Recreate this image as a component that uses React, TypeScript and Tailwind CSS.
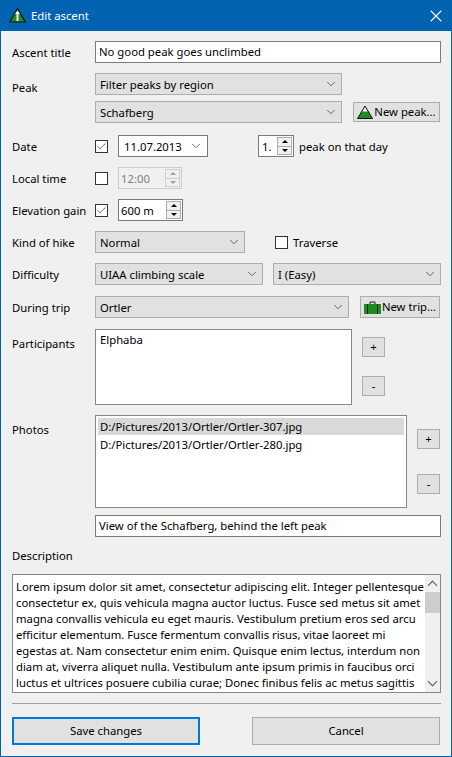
// App.tsx
import { ChevronDown, X, Check } from 'lucide-react';
import type { ReactNode } from 'react';

const lorem = [
  'Lorem ipsum dolor sit amet, consectetur adipiscing elit. Integer pellentesque',
  'consectetur ex, quis vehicula magna auctor luctus. Fusce sed metus sit amet',
  'magna convallis vehicula eu eget mauris. Vestibulum pretium eros sed arcu',
  'efficitur elementum. Fusce fermentum convallis risus, vitae laoreet mi',
  'egestas at. Nam consectetur enim enim. Quisque enim lectus, interdum non',
  'diam at, viverra aliquet nulla. Vestibulum ante ipsum primis in faucibus orci',
  'luctus et ultrices posuere cubilia curae; Donec finibus felis ac metus sagittis',
];

function Combo({ text, className }: { text: string; className: string }) {
  return (
    <div className={`h-[22px] flex items-center justify-between pl-1 pr-[3px] bg-[#e1e1e1] border border-[#adadad] ${className}`}>
      <span className="mt-px">{text}</span>
      <ChevronDown size={14} strokeWidth={1.2} className="text-[#333]" />
    </div>
  );
}

function Label({ children }: { children: ReactNode }) {
  return <div className="w-[83px] shrink-0 mt-px">{children}</div>;
}

function Checkbox({ checked }: { checked?: boolean }) {
  return (
    <div className="w-[13px] h-[13px] shrink-0 bg-white border border-[#333] flex items-center justify-center">
      {checked && <Check size={11} strokeWidth={1.6} className="text-[#333]" />}
    </div>
  );
}

function Spin({ disabled }: { disabled?: boolean }) {
  const fill = disabled ? 'border-b-[#a0a0a0]' : 'border-b-black';
  const fillDown = disabled ? 'border-t-[#a0a0a0]' : 'border-t-black';
  const edge = disabled ? 'border-[#cfcfcf]' : 'border-[#adadad]';
  return (
    <div className={`w-[15px] h-[18px] flex flex-col border ${edge} bg-[#f0f0f0]`}>
      <div className={`flex-1 flex items-center justify-center border-b ${edge}`}>
        <div className={`w-0 h-0 border-x-[3px] border-x-transparent border-b-[3px] ${fill}`} />
      </div>
      <div className="flex-1 flex items-center justify-center">
        <div className={`w-0 h-0 border-x-[3px] border-x-transparent border-t-[3px] ${fillDown}`} />
      </div>
    </div>
  );
}

function SmallButton({ text }: { text: string }) {
  return (
    <div className="w-[23px] h-5 flex items-center justify-center bg-[#e1e1e1] border border-[#adadad]">{text}</div>
  );
}

function PeakIcon() {
  return (
    <svg width="16" height="14" viewBox="0 0 16 14" className="shrink-0">
      <path d="M8 1 L15.5 13.5 H0.5 Z" fill="#228b22" stroke="#111" strokeWidth="1" />
      <path d="M8 2 L10.6 6.4 H5.4 Z" fill="#fff" />
    </svg>
  );
}

function AppIcon() {
  return (
    <svg width="17" height="15" viewBox="0 0 17 15" className="shrink-0 -mt-px">
      <path d="M8.5 0.8 L16.3 14 H0.7 Z" fill="#228b22" stroke="#111" strokeWidth="1.2" />
      <path d="M8.5 2.5 L11 6 H9.4 V13 H7.6 V6 H6 Z" fill="#fff" />
    </svg>
  );
}

function TripIcon() {
  return (
    <svg width="17" height="13" viewBox="0 0 17 13" className="shrink-0">
      <path d="M6 3 V1 H11 V3" fill="none" stroke="#222" strokeWidth="1" />
      <rect x="0" y="3" width="17" height="10" fill="#1f8a1f" />
      <rect x="3" y="3" width="1" height="10" fill="#123" />
      <rect x="13" y="3" width="1" height="10" fill="#123" />
    </svg>
  );
}

export default function App() {
  return (
    <div className="w-[452px] h-[757px] flex flex-col bg-[#f0f0f0] border border-[#0063b1] text-[11.3px] leading-4 text-black font-['Noto_Sans','Open_Sans',sans-serif] overflow-hidden">
      {/* title bar */}
      <div className="h-[30px] shrink-0 bg-[#0063b1] flex items-center pl-[8px] pr-[2px] text-white">
        <AppIcon />
        <span className="ml-[5px]">Edit ascent</span>
        <X size={20} strokeWidth={1.3} className="ml-auto mr-[3px] -mt-px" />
      </div>

      <div className="flex flex-col pl-[11px] pr-[10px]">
        <div className="flex items-center mt-[10px]">
          <Label>Ascent title</Label>
          <div className="flex-1 h-[22px] flex items-center px-[3px] bg-white border border-[#7a7a7a]">No good peak goes unclimbed</div>
        </div>

        <div className="flex mt-[10px]">
          <div className="w-[83px] shrink-0 mt-[7px]">Peak</div>
          <div className="flex-1 flex flex-col gap-[6px]">
            <Combo text="Filter peaks by region" className="w-[247px]" />
            <div className="flex items-center">
              <Combo text="Schafberg" className="w-[247px]" />
              <div className="ml-[11px] w-[87px] h-5 flex items-center justify-center gap-[1px] bg-[#e1e1e1] border border-[#adadad]">
                <PeakIcon />
                <span>New peak...</span>
              </div>
            </div>
          </div>
        </div>

        <div className="flex items-center mt-[12px]">
          <Label>Date</Label>
          <Checkbox checked />
          <div className="ml-[10px] w-[90px] h-[22px] flex items-center justify-between pl-[5px] pr-[4px] bg-white border border-[#7a7a7a]">
            <span className="mt-px">11.07.2013</span>
            <ChevronDown size={14} strokeWidth={1.2} className="text-[#333]" />
          </div>
          <div className="ml-[50px] w-[36px] h-[22px] flex items-center justify-between pl-[3px] pr-[1px] bg-white border border-[#7a7a7a]">
            <span className="mt-px">1.</span>
            <Spin />
          </div>
          <span className="ml-[5px] mt-px">peak on that day</span>
        </div>

        <div className="flex items-center mt-[10px]">
          <Label>Local time</Label>
          <Checkbox />
          <div className="ml-[10px] w-[64px] h-[22px] flex items-center justify-between pl-[2px] pr-[1px] bg-[#f0f0f0] border border-[#cccccc] text-[#808080]">
            <span className="mt-px">12:00</span>
            <Spin disabled />
          </div>
        </div>

        <div className="flex items-center mt-[10px]">
          <Label>Elevation gain</Label>
          <Checkbox checked />
          <div className="ml-[10px] w-[65px] h-[22px] flex items-center justify-between pl-[2px] pr-[1px] bg-white border border-[#7a7a7a]">
            <span className="mt-px">600 m</span>
            <Spin />
          </div>
        </div>

        <div className="flex items-center mt-[10px]">
          <Label>Kind of hike</Label>
          <Combo text="Normal" className="w-[150px]" />
          <div className="ml-[30px]">
            <Checkbox />
          </div>
          <span className="ml-[5px] mt-px">Traverse</span>
        </div>

        <div className="flex items-center mt-[10px]">
          <Label>Difficulty</Label>
          <Combo text="UIAA climbing scale" className="w-[168px]" />
          <Combo text="I (Easy)" className="ml-[10px] flex-1" />
        </div>

        <div className="flex items-center mt-[11px]">
          <Label>During trip</Label>
          <Combo text="Ortler" className="w-[254px]" />
          <div className="ml-[11px] w-[80px] h-[22px] flex items-center justify-center gap-[1px] bg-[#e1e1e1] border border-[#adadad]">
            <TripIcon />
            <span>New trip...</span>
          </div>
        </div>

        <div className="flex mt-[11px]">
          <div className="w-[83px] shrink-0 mt-[7px]">Participants</div>
          <div className="w-[257px] h-[76px] bg-white border border-[#828790] px-1 py-[2px]">Elphaba</div>
          <div className="ml-[10px] flex flex-col gap-[19px] pt-2">
            <SmallButton text="+" />
            <SmallButton text="-" />
          </div>
        </div>

        <div className="flex mt-[10px]">
          <div className="w-[83px] shrink-0 mt-[7px]">Photos</div>
          <div className="flex-1 flex flex-col gap-[7px]">
            <div className="flex">
              <div className="w-[312px] h-[93px] bg-white border border-[#828790] p-[2px]">
                <div className="h-[17px] flex items-center pl-[2px] bg-[#d9d9d9]">D:/Pictures/2013/Ortler/Ortler-307.jpg</div>
                <div className="h-[20px] flex items-center pl-[2px]">D:/Pictures/2013/Ortler/Ortler-280.jpg</div>
              </div>
              <div className="ml-[10px] flex flex-col gap-[25px] pt-[14px]">
                <SmallButton text="+" />
                <SmallButton text="-" />
              </div>
            </div>
            <div className="h-[22px] flex items-center px-[3px] bg-white border border-[#7a7a7a]">View of the Schafberg, behind the left peak</div>
          </div>
        </div>

        <div className="mt-[10px] h-[18px] flex items-center">Description</div>

        <div className="mt-[9px] h-[119px] flex bg-white border border-[#828790] overflow-hidden">
          <div className="flex-1 px-[3px] pt-[4px] overflow-hidden">
            {lorem.map((line) => (
              <div key={line} className="whitespace-nowrap">{line}</div>
            ))}
          </div>
          <div className="w-[15px] shrink-0 flex flex-col items-center bg-[#f0f0f0]">
            <div className="h-[17px] flex items-center justify-center">
              <div className="w-[7px] h-[7px] border-l-[1.5px] border-t-[1.5px] border-[#555] rotate-45 mt-1" />
            </div>
            <div className="w-full h-[21px] bg-[#cdcdcd]" />
            <div className="mt-auto h-[17px] flex items-center justify-center">
              <div className="w-[7px] h-[7px] border-r-[1.5px] border-b-[1.5px] border-[#555] rotate-45 -mt-1" />
            </div>
          </div>
        </div>

        <div className="mt-[10px] h-px bg-[#a0a0a0]" />

        <div className="mt-[13px] flex justify-between pr-px">
          <div className="w-[188px] h-[28px] flex items-center justify-center bg-[#e1e1e1] border-2 border-[#0078d7]">Save changes</div>
          <div className="w-[188px] h-[28px] flex items-center justify-center bg-[#e1e1e1] border border-[#adadad]">Cancel</div>
        </div>
      </div>
    </div>
  );
}
